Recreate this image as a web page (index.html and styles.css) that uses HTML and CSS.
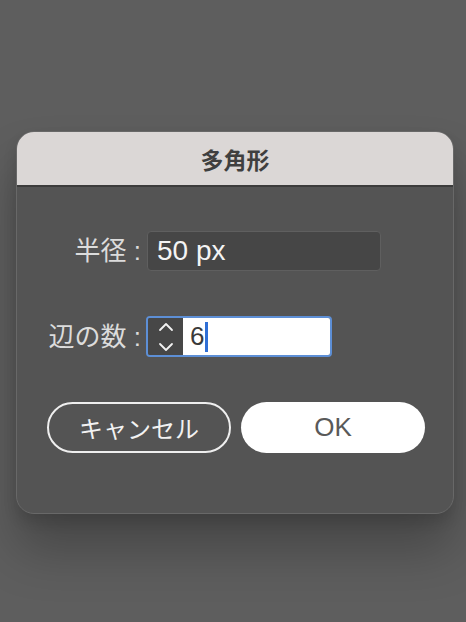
FILE: index.html
```html
<!DOCTYPE html>
<html lang="ja">
<head>
<meta charset="utf-8">
<title>多角形</title>
<link rel="stylesheet" href="styles.css">
</head>
<body>
<div class="dialog">
  <div class="header">多角形</div>
  <div class="content">
    <div class="form">
      <label class="label">半径 :</label>
      <div class="field field-radius">50 px</div>
      <label class="label">辺の数 :</label>
      <div class="field field-sides">
        <div class="stepper">
          <svg width="16" height="34" viewBox="0 0 16 34">
            <path d="M2 10 L8 4 L14 10" fill="none" stroke="#f2f2f2" stroke-width="1.8" stroke-linecap="round" stroke-linejoin="round"/>
            <path d="M2 24 L8 30 L14 24" fill="none" stroke="#f2f2f2" stroke-width="1.8" stroke-linecap="round" stroke-linejoin="round"/>
          </svg>
        </div>
        <div class="value"><span>6</span><span class="caret"></span></div>
      </div>
    </div>
    <div class="buttons">
      <button class="btn btn-cancel">キャンセル</button>
      <button class="btn btn-ok">OK</button>
    </div>
  </div>
</div>
</body>
</html>
```
FILE: styles.css
```css
html, body {
  margin: 0;
  padding: 0;
}
body {
  width: 466px;
  height: 622px;
  background: #5e5e5e;
  font-family: "Liberation Sans", "Noto Sans CJK JP", sans-serif;
  overflow: hidden;
}
.dialog {
  margin: 131px 0 0 16px;
  width: 438px;
  height: 383px;
  box-sizing: border-box;
  background: #545454;
  border-radius: 18px;
  border: 1px solid #686868;
  box-shadow: 0 36px 50px rgba(0, 0, 0, 0.25), 0 8px 14px rgba(0, 0, 0, 0.12);
  overflow: hidden;
  display: flex;
  flex-direction: column;
}
.header {
  height: 55px;
  flex: none;
  background: #dbd7d6;
  border-bottom: 2px solid #3c3c3c;
  display: flex;
  align-items: center;
  justify-content: center;
  font-family: "Noto Sans CJK JP", sans-serif;
  font-weight: 700;
  font-size: 23px;
  color: #3f3f3f;
  padding-top: 1px;
  box-sizing: border-box;
}
.content {
  padding: 44px 0 0 24px;
}
.form {
  display: grid;
  grid-template-columns: 100px auto;
  column-gap: 6px;
  row-gap: 45px;
  align-items: center;
  justify-items: start;
}
.label {
  justify-self: end;
  font-family: "Liberation Sans", "Noto Sans CJK JP", sans-serif;
  font-size: 26px;
  color: #dcdcdc;
  line-height: 40px;
  white-space: nowrap;
}
.field {
  box-sizing: border-box;
  border-radius: 4px;
}
.field-radius {
  width: 234px;
  height: 40px;
  background: #464646;
  border: 1px solid #5f5f5f;
  color: #f4f4f4;
  font-size: 28px;
  line-height: 38px;
  padding-left: 9px;
}
.field-sides {
  width: 186px;
  height: 41px;
  border: 2px solid #5d8fd6;
  display: flex;
  overflow: hidden;
  margin-left: -1px;
}
.stepper {
  width: 35px;
  background: #474747;
  display: flex;
  align-items: center;
  justify-content: center;
  flex: none;
}
.stepper svg {
  display: block;
}
.value {
  flex: 1;
  background: #ffffff;
  display: flex;
  align-items: center;
  padding-left: 7px;
  font-size: 26px;
  color: #3a3a3a;
}
.caret {
  display: inline-block;
  width: 3px;
  height: 30px;
  background: #2f6fd6;
  margin-left: 1px;
}
.buttons {
  display: flex;
  gap: 10px;
  margin-top: 45px;
  margin-left: 6px;
}
.btn {
  width: 184px;
  height: 51px;
  border-radius: 26px;
  box-sizing: border-box;
  font-family: "Liberation Sans", "Noto Sans CJK JP", sans-serif;
  padding: 0;
  cursor: default;
}
.btn-cancel {
  background: transparent;
  border: 2px solid #efefef;
  color: #f2f2f2;
  font-family: "Noto Sans CJK JP", sans-serif;
  font-size: 24px;
  font-weight: 400;
}
.btn-ok {
  background: #ffffff;
  border: none;
  color: #595959;
  font-size: 26px;
}
```
